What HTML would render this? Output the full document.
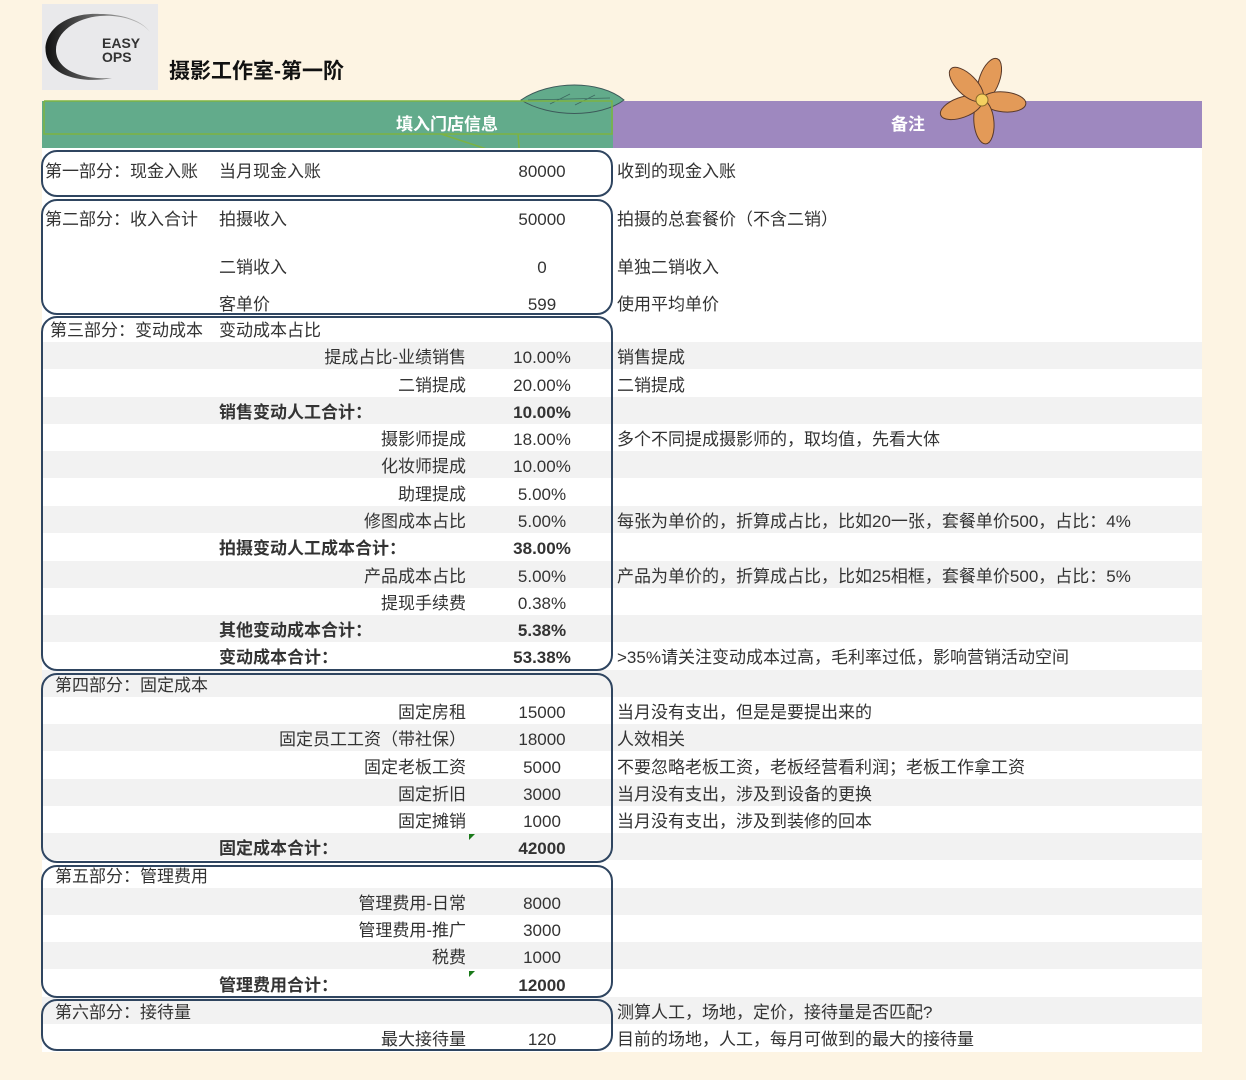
<!DOCTYPE html>
<html><head><meta charset="utf-8"><style>
body{margin:0;width:1246px;height:1080px;background:#fdf4e3;position:relative;overflow:hidden;font-family:"Liberation Sans","Noto Sans CJK SC",sans-serif;color:#333;}
.a{position:absolute;white-space:nowrap;font-size:17px;line-height:20px;margin-top:2px;}
.s{position:absolute;left:42px;width:1160px;height:27px;background:#f2f2f2;}
.b{font-weight:bold;}
.r{text-align:right;width:300px;left:166px;}
.v{text-align:center;width:100px;left:492px;}
.box{position:absolute;left:41px;width:572px;border:2px solid #2f4560;border-radius:16px;box-sizing:border-box;}
</style></head><body>
<div style="position:absolute;left:42px;top:4px;width:116px;height:86px;background:#e9e9eb;"></div>
<svg style="position:absolute;left:42px;top:4px" width="116" height="86">
<defs><linearGradient id="g" x1="0" y1="0" x2="1" y2="0"><stop offset="0" stop-color="#111"/><stop offset="1" stop-color="#ccc"/></linearGradient></defs>
<path d="M58 10 C20 8 0 30 4 50 C8 72 40 80 70 74 C40 76 14 66 14 46 C14 28 34 14 58 12 C80 10 100 18 108 28 C100 16 80 10 58 10Z" fill="url(#g)"/>
<text x="60" y="44" font-family="Liberation Sans" font-size="14" fill="#333" font-weight="bold">EASY</text>
<text x="60" y="58" font-family="Liberation Sans" font-size="14" fill="#333" font-weight="bold">OPS</text>
</svg>
<div class="a b" style="left:169px;top:58px;font-size:21px;line-height:24px;color:#111">摄影工作室-第一阶</div>
<div style="position:absolute;left:42px;top:101px;width:571px;height:47px;background:#62ab8b;"></div>
<div style="position:absolute;left:613px;top:101px;width:589px;height:47px;background:#9e88bf;"></div>
<svg style="position:absolute;left:0;top:0" width="1246" height="170">
<path d="M521 100 C550 80 600 80 624 100 C600 118 550 118 521 100Z" fill="#62ab8b" stroke="#3d5a5a" stroke-width="1"/>
<path d="M528 100 L610 98 M550 104 L570 94 M575 105 L595 95" stroke="#3d6a60" stroke-width="0.8" fill="none"/>
<path d="M44 101 L612 101 L612 134 L441 134 L520 160 L518 134" stroke="#7cb342" stroke-width="1.5" fill="none"/>
<path d="M44 101 L44 134 L441 134" stroke="#7cb342" stroke-width="1.5" fill="none"/>
<g transform="translate(982,100)" fill="#e39a58" stroke="#5a3a2a" stroke-width="1">
<ellipse cx="0" cy="-22" rx="10" ry="22" transform="rotate(20)"/>
<ellipse cx="0" cy="-22" rx="10" ry="22" transform="rotate(95)"/>
<ellipse cx="0" cy="-22" rx="10" ry="22" transform="rotate(175)"/>
<ellipse cx="0" cy="-22" rx="10" ry="22" transform="rotate(250)"/>
<ellipse cx="0" cy="-22" rx="10" ry="22" transform="rotate(315)"/>
<circle r="6" fill="#f5d060" stroke="#8a6a2a"/>
</g>
</svg>
<div class="a b" style="left:396px;top:113px;color:#fff">填入门店信息</div>
<div class="a b" style="left:891px;top:113px;color:#fff">备注</div>
<div style="position:absolute;left:42px;top:148px;width:1160px;height:904px;background:#fff;"></div>
<div class="s" style="top:342px"></div><div class="s" style="top:397px"></div><div class="s" style="top:451px"></div><div class="s" style="top:506px"></div><div class="s" style="top:561px"></div><div class="s" style="top:615px"></div><div class="s" style="top:670px"></div><div class="s" style="top:724px"></div><div class="s" style="top:779px"></div><div class="s" style="top:833px"></div><div class="s" style="top:888px"></div><div class="s" style="top:942px"></div><div class="s" style="top:997px"></div>
<div class="box" style="top:150px;height:47px"></div>
<div class="box" style="top:199px;height:116px"></div>
<div class="box" style="top:316px;height:355px"></div>
<div class="box" style="top:673px;height:190px"></div>
<div class="box" style="top:865px;height:133px"></div>
<div class="box" style="top:999px;height:52px"></div>
<div style="position:absolute;left:469px;top:834px;border-left:6px solid #1a7a1a;border-bottom:6px solid transparent"></div>
<div style="position:absolute;left:469px;top:971px;border-left:6px solid #1a7a1a;border-bottom:6px solid transparent"></div>

<div class="a" style="left:45px;top:160px">第一部分：现金入账</div><div class="a" style="left:219px;top:160px">当月现金入账</div><div class="a v" style="top:160px">80000</div><div class="a" style="left:617px;top:160px">收到的现金入账</div>
<div class="a" style="left:45px;top:208px">第二部分：收入合计</div><div class="a" style="left:219px;top:208px">拍摄收入</div><div class="a v" style="top:208px">50000</div><div class="a" style="left:617px;top:208px">拍摄的总套餐价（不含二销）</div>
<div class="a" style="left:219px;top:256px">二销收入</div><div class="a v" style="top:256px">0</div><div class="a" style="left:617px;top:256px">单独二销收入</div>
<div class="a" style="left:219px;top:293px">客单价</div><div class="a v" style="top:293px">599</div><div class="a" style="left:617px;top:293px">使用平均单价</div>
<div class="a" style="left:50px;top:319px">第三部分：变动成本</div><div class="a" style="left:219px;top:319px">变动成本占比</div>
<div class="a r" style="top:346px">提成占比-业绩销售</div><div class="a v" style="top:346px">10.00%</div><div class="a" style="left:617px;top:346px">销售提成</div>
<div class="a r" style="top:374px">二销提成</div><div class="a v" style="top:374px">20.00%</div><div class="a" style="left:617px;top:374px">二销提成</div>
<div class="a b" style="left:219px;top:401px">销售变动人工合计：</div><div class="a v b" style="top:401px">10.00%</div>
<div class="a r" style="top:428px">摄影师提成</div><div class="a v" style="top:428px">18.00%</div><div class="a" style="left:617px;top:428px">多个不同提成摄影师的，取均值，先看大体</div>
<div class="a r" style="top:455px">化妆师提成</div><div class="a v" style="top:455px">10.00%</div>
<div class="a r" style="top:483px">助理提成</div><div class="a v" style="top:483px">5.00%</div>
<div class="a r" style="top:510px">修图成本占比</div><div class="a v" style="top:510px">5.00%</div><div class="a" style="left:617px;top:510px">每张为单价的，折算成占比，比如20一张，套餐单价500，占比：4%</div>
<div class="a b" style="left:219px;top:537px">拍摄变动人工成本合计：</div><div class="a v b" style="top:537px">38.00%</div>
<div class="a r" style="top:565px">产品成本占比</div><div class="a v" style="top:565px">5.00%</div><div class="a" style="left:617px;top:565px">产品为单价的，折算成占比，比如25相框，套餐单价500，占比：5%</div>
<div class="a r" style="top:592px">提现手续费</div><div class="a v" style="top:592px">0.38%</div>
<div class="a b" style="left:219px;top:619px">其他变动成本合计：</div><div class="a v b" style="top:619px">5.38%</div>
<div class="a b" style="left:219px;top:646px">变动成本合计：</div><div class="a v b" style="top:646px">53.38%</div><div class="a" style="left:617px;top:646px">&gt;35%请关注变动成本过高，毛利率过低，影响营销活动空间</div>
<div class="a" style="left:55px;top:674px">第四部分：固定成本</div>
<div class="a r" style="top:701px">固定房租</div><div class="a v" style="top:701px">15000</div><div class="a" style="left:617px;top:701px">当月没有支出，但是是要提出来的</div>
<div class="a r" style="top:728px">固定员工工资（带社保）</div><div class="a v" style="top:728px">18000</div><div class="a" style="left:617px;top:728px">人效相关</div>
<div class="a r" style="top:756px">固定老板工资</div><div class="a v" style="top:756px">5000</div><div class="a" style="left:617px;top:756px">不要忽略老板工资，老板经营看利润；老板工作拿工资</div>
<div class="a r" style="top:783px">固定折旧</div><div class="a v" style="top:783px">3000</div><div class="a" style="left:617px;top:783px">当月没有支出，涉及到设备的更换</div>
<div class="a r" style="top:810px">固定摊销</div><div class="a v" style="top:810px">1000</div><div class="a" style="left:617px;top:810px">当月没有支出，涉及到装修的回本</div>
<div class="a b" style="left:219px;top:837px">固定成本合计：</div><div class="a v b" style="top:837px">42000</div>
<div class="a" style="left:55px;top:865px">第五部分：管理费用</div>
<div class="a r" style="top:892px">管理费用-日常</div><div class="a v" style="top:892px">8000</div>
<div class="a r" style="top:919px">管理费用-推广</div><div class="a v" style="top:919px">3000</div>
<div class="a r" style="top:946px">税费</div><div class="a v" style="top:946px">1000</div>
<div class="a b" style="left:219px;top:974px">管理费用合计：</div><div class="a v b" style="top:974px">12000</div>
<div class="a" style="left:55px;top:1001px">第六部分：接待量</div><div class="a" style="left:617px;top:1001px">测算人工，场地，定价，接待量是否匹配?</div>
<div class="a r" style="top:1028px">最大接待量</div><div class="a v" style="top:1028px">120</div><div class="a" style="left:617px;top:1028px">目前的场地，人工，每月可做到的最大的接待量</div>
</body></html>
